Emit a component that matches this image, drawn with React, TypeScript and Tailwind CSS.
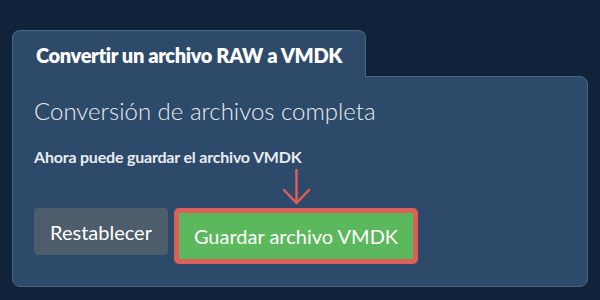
import React from "react";

export default function App() {
  return (
    <div
      className="w-[600px] h-[300px] bg-[#11233a] pl-[12px] pt-[30px] overflow-hidden"
      style={{ fontFamily: "Lato, 'Open Sans', sans-serif" }}
    >
      <div className="w-[576px] flex flex-col">
        <div className="relative z-10 -mb-px w-[354px] h-[47px] bg-[#2d4a6a] border border-b-0 border-[#4a6483] rounded-t-[8px] pl-[23px] pt-[12px]">
          <span className="text-[20px] font-extrabold leading-[24px] tracking-[-0.35px] text-white">
            Convertir un archivo RAW a VMDK
          </span>
        </div>
        <div className="h-[211px] bg-[#2d4a6a] border border-[#4a6483] rounded-tr-[8px] rounded-b-[8px] px-[21px] pt-[18px]">
          <h2 className="text-[24px] font-light leading-[32px] text-[#e8ecf0]">
            Conversión de archivos completa
          </h2>
          <p className="mt-[19px] text-[16px] font-bold leading-[22px] text-[#e8ecf0] tracking-[-0.2px]">
            Ahora puede guardar el archivo VMDK
          </p>
          <div className="relative mt-[40px] flex items-start gap-[6px]">
            <button className="h-[47px] w-[134px] rounded-[4px] bg-[#4e5d6c] text-[20px] text-white leading-none">
              Restablecer
            </button>
            <div className="relative">
              <svg
                className="absolute left-[108px] -top-[39px]"
                width="30"
                height="36"
                viewBox="0 0 30 36"
                fill="none"
                stroke="#dc5f5a"
                strokeWidth="2.5"
                strokeLinecap="round"
                strokeLinejoin="round"
              >
                <path d="M14.5 1 V34" />
                <path d="M2 21 L14.5 34 L27 21" />
              </svg>
              <div className="border-[5px] border-[#dc5f5a] rounded-[5px]">
                <button className="h-[46px] w-[234px] bg-[#5cb85c] text-[20px] text-white leading-none">
                  Guardar archivo VMDK
                </button>
              </div>
            </div>
          </div>
        </div>
      </div>
    </div>
  );
}
